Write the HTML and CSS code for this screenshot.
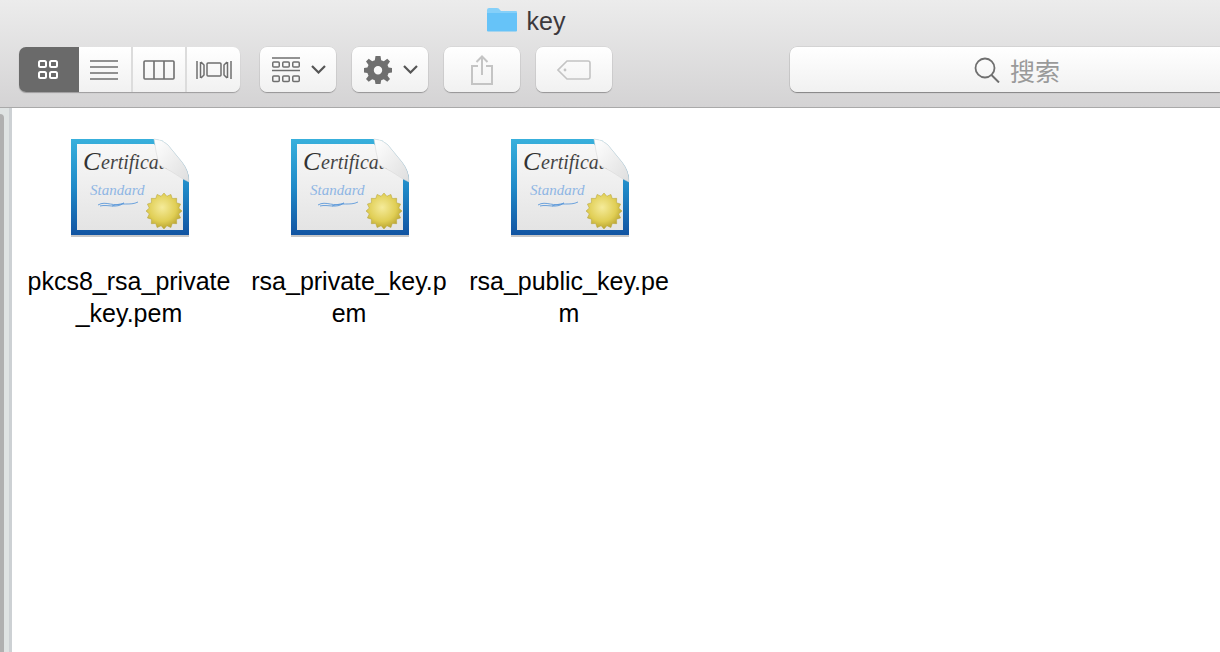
FILE: index.html
```html
<!DOCTYPE html>
<html lang="zh-CN">
<head>
  <meta charset="UTF-8" />
  <title>key</title>
  <link rel="stylesheet" href="styles.css">
</head>
<body>

  <svg width="0" height="0" class="defs">
    <defs>
      <linearGradient id="frame" x1="0" y1="0" x2="0" y2="1">
        <stop offset="0" stop-color="#38b0dc"/>
        <stop offset="0.5" stop-color="#1f8ac8"/>
        <stop offset="1" stop-color="#1254a2"/>
      </linearGradient>
      <linearGradient id="paper" x1="0" y1="0" x2="0" y2="1">
        <stop offset="0" stop-color="#f8f8f8"/>
        <stop offset="1" stop-color="#e4e4e4"/>
      </linearGradient>
      <linearGradient id="flap" x1="0" y1="0" x2="1" y2="1">
        <stop offset="0" stop-color="#ffffff"/>
        <stop offset="1" stop-color="#dedede"/>
      </linearGradient>
      <radialGradient id="seal" cx="0.45" cy="0.4" r="0.65">
        <stop offset="0" stop-color="#f5eb9a"/>
        <stop offset="0.6" stop-color="#e0ce55"/>
        <stop offset="1" stop-color="#b09a28"/>
      </radialGradient>
      <symbol id="cert" viewBox="0 0 120 100">
        <path d="M1 1H83Q92 1 98 7L112 24Q119 33 119 42V98H1Z" fill="#000" opacity=".22" transform="translate(0 1)"/>
        <path d="M1 1H83Q92 1 98 7L112 24Q119 33 119 42V97H1Z" fill="url(#frame)"/>
        <path d="M7 6H84L113 40V92H7Z" fill="url(#paper)"/>
        <text x="13" y="32" class="cert-title">C</text>
        <text x="31" y="31" class="cert-rest">ertificate</text>
        <text x="20" y="57" class="cert-std">Standard</text>
        <path d="M28 67C36 62 44 70 54 65C46 71 38 66 30 68M42 68C52 64 60 68 68 64" fill="none" stroke="#5d9ada" stroke-width=".9"/>
        <path d="M84 1Q92 1 98 7L112 24Q119 33 119 44L113 41Q100 32 89 27Q86 15 84 1Z" fill="url(#flap)" stroke="#d4d4d4" stroke-width=".5"/>
        <path transform="translate(94 73)" d="M18 0L14.700 2.900 16.600 6.900 12.500 8.300 12.700 12.700 8.300 12.500 6.900 16.600 2.900 14.700 0 18-2.900 14.700-6.900 16.600-8.300 12.500-12.700 12.700-12.500 8.300-16.600 6.900-14.700 2.900-18 0-14.700-2.900-16.600-6.900-12.500-8.300-12.700-12.700-8.300-12.500-6.900-16.600-2.900-14.700 0-18 2.900-14.700 6.900-16.600 8.300-12.500 12.700-12.700 12.500-8.300 16.600-6.900 14.700-2.900Z" fill="url(#seal)" stroke="#b5a338" stroke-width=".5"/>
      </symbol>
    </defs>
  </svg>

  <header class="toolbar">
    <div class="title">
      <svg class="folder" width="32" height="25" viewBox="0 0 32 25">
        <path d="M1 3Q1 1 3 1H11Q13 1 14 3L15 4H30Q31 4 31 5V24H1Z" fill="#85d0f9"/>
        <path d="M1 6H31V23Q31 24.500 30 24.500H2Q1 24.500 1 23Z" fill="#66c3f8"/>
      </svg>
      <span>key</span>
    </div>

    <div class="tools">
      <div class="btn-group">
        <button class="btn seg active">
          <svg width="20" height="20" viewBox="0 0 20 20" fill="none" stroke="#fff" stroke-width="2"><rect x="1" y="1" width="7" height="6" rx="1.500"/><rect x="12" y="1" width="7" height="6" rx="1.500"/><rect x="1" y="12" width="7" height="6" rx="1.500"/><rect x="12" y="12" width="7" height="6" rx="1.500"/></svg>
        </button>
        <button class="btn seg s-list">
          <svg width="28" height="20" viewBox="0 0 28 20" stroke="#6f6f6f" stroke-width="1.400"><path d="M0 1H28M0 7H28M0 13H28M0 19H28"/></svg>
        </button>
        <button class="btn seg s-col">
          <svg width="32" height="20" viewBox="0 0 32 20" fill="none" stroke="#6f6f6f" stroke-width="1.600"><rect x="1" y="1" width="30" height="18" rx="1"/><path d="M11 1V19M21 1V19"/></svg>
        </button>
        <button class="btn seg s-flow">
          <svg width="36" height="20" viewBox="0 0 36 20" fill="none" stroke="#6f6f6f" stroke-width="1.500"><rect x="11" y="3" width="14" height="13" rx="1"/><path d="M1 1V19M35 1V19M4.500 2V18M31.500 2V18M5 2L8 5V15L5 18M31 2L28 5V15L31 18"/></svg>
        </button>
      </div>

      <button class="btn arrange">
        <svg width="28" height="26" viewBox="0 0 28 26" fill="none" stroke="#6f6f6f"><path d="M0 1H28M0 13.500H28" stroke-width="1.300"/><g stroke-width="1.500"><rect x=".75" y="5" width="6.500" height="5" rx="1"/><rect x="10.750" y="5" width="6.500" height="5" rx="1"/><rect x="20.750" y="5" width="6.500" height="5" rx="1"/><rect x=".75" y="19" width="6.500" height="5.500" rx="1"/><rect x="10.750" y="19" width="6.500" height="5.500" rx="1"/><rect x="20.750" y="19" width="6.500" height="5.500" rx="1"/></g></svg>
        <svg class="chev" width="15" height="9" viewBox="0 0 15 9" fill="none" stroke="#555" stroke-width="2.200"><path d="M1 1L7.500 7.500L14 1"/></svg>
      </button>

      <button class="btn action">
        <svg width="28" height="28" viewBox="0 0 28 28"><path fill="#6f6f6f" fill-rule="evenodd" d="M11.500 0H16.500L17.200 4.200L19.800 5.300L23.300 2.800L26 5.500L23.500 9L24.600 11.500L28 12V16.500L24.600 17.100L23.500 19.700L26 23L23.300 25.800L19.800 23.300L17.200 24.300L16.500 28H11.500L10.800 24.300L8.200 23.300L4.700 25.800L2 23L4.500 19.700L3.400 17.100L0 16.500V12L3.400 11.500L4.500 9L2 5.500L4.700 2.800L8.200 5.300L10.800 4.200ZM14 10A4.200 4.200 0 1 0 14 18.400A4.200 4.200 0 1 0 14 10Z"/></svg>
        <svg class="chev" width="15" height="9" viewBox="0 0 15 9" fill="none" stroke="#555" stroke-width="2.200"><path d="M1 1L7.500 7.500L14 1"/></svg>
      </button>

      <button class="btn share">
        <svg width="22" height="30" viewBox="0 0 22 30" fill="none" stroke="#c4c4c4" stroke-width="2"><path d="M7 11H1V29H21V11H15M11 20V2M5.500 7L11 1.500L16.500 7"/></svg>
      </button>

      <button class="btn tag">
        <svg width="34" height="20" viewBox="0 0 34 20" fill="none" stroke="#c4c4c4" stroke-width="1.600"><path d="M10 1H31Q33 1 33 3V17Q33 19 31 19H10L1 10Z"/><circle cx="8" cy="10" r="1.400" fill="#c4c4c4" stroke="none"/></svg>
      </button>

      <div class="search">
        <svg width="26" height="26" viewBox="0 0 26 26" fill="none" stroke="#6f6f6f"><circle cx="11" cy="11" r="9.500" stroke-width="1.800"/><path d="M17.500 18L25 25.500" stroke-width="2"/></svg>
        <span>搜索</span>
      </div>
    </div>
  </header>

  <main class="content">
    <div class="gutter"></div>
    <div class="files">
      <div class="file">
        <svg class="cert" width="120" height="100"><use href="#cert"/></svg>
        <div class="name">pkcs8_rsa_private<br>_key.pem</div>
      </div>
      <div class="file">
        <svg class="cert" width="120" height="100"><use href="#cert"/></svg>
        <div class="name">rsa_private_key.p<br>em</div>
      </div>
      <div class="file">
        <svg class="cert" width="120" height="100"><use href="#cert"/></svg>
        <div class="name">rsa_public_key.pe<br>m</div>
      </div>
    </div>
  </main>

</body>
</html>
```

FILE: styles.css
```css
html,
body {
  margin: 0;
  height: 100%;
  overflow: hidden;
}

body {
  display: flex;
  flex-direction: column;
  background: #fff;
  font-family: "Liberation Sans", "Noto Sans CJK SC", sans-serif;
}

.defs {
  position: absolute;
}

/* Barra superior */
.toolbar {
  height: 108px;
  flex: none;
  box-sizing: border-box;
  background: linear-gradient(to bottom, #ececec, #d4d3d4);
  border-bottom: 1px solid #a9a9a9;
}

.title {
  height: 47px;
  display: flex;
  justify-content: center;
  align-items: flex-start;
  gap: 9px;
  padding: 8px 169px 0 0;
  box-sizing: border-box;
  color: #3c383c;
  font-size: 25px;
  line-height: 27px;
}

.folder {
  margin-top: -1px;
}

.tools {
  display: flex;
  align-items: center;
  padding-left: 19px;
}

.btn {
  height: 45px;
  box-sizing: border-box;
  display: flex;
  align-items: center;
  justify-content: center;
  padding: 0;
  border: none;
  border-radius: 7px;
  background: linear-gradient(to bottom, #fff, #f1f1f1);
  box-shadow: 0 1px 1px rgba(0, 0, 0, 0.28), 0 0 0 0.5px rgba(0, 0, 0, 0.08);
}

.btn-group {
  display: flex;
  gap: 2px;
  height: 45px;
  border-radius: 7px;
  background: #dcdcdc;
  box-shadow: 0 1px 1px rgba(0, 0, 0, 0.28);
  overflow: hidden;
}

.seg {
  border-radius: 0;
  box-shadow: none;
}

.active {
  width: 60px;
  padding-right: 2px;
  background: #6a6a6a;
  margin-right: -2px;
}

.s-list {
  width: 52px;
  padding-right: 2px;
}

.s-col {
  width: 52px;
}

.s-flow {
  width: 53px;
}

.arrange {
  width: 76px;
  margin-left: 20px;
  padding-left: 12px;
  justify-content: flex-start;
  gap: 11px;
}

.action {
  width: 76px;
  margin-left: 16px;
  padding-left: 12px;
  justify-content: flex-start;
  gap: 11px;
}

.share {
  width: 76px;
  margin-left: 16px;
}

.tag {
  width: 76px;
  margin-left: 16px;
}

.search {
  margin-left: 178px;
  flex: 1;
  height: 45px;
  box-sizing: border-box;
  display: flex;
  align-items: center;
  gap: 10px;
  padding-left: 184px;
  border-radius: 7px 0 0 7px;
  background: linear-gradient(to bottom, #fff, #f1f1f1);
  box-shadow: 0 1px 1px rgba(0, 0, 0, 0.35), 0 0 0 0.5px rgba(0, 0, 0, 0.12);
  color: #9a9a9a;
  font-size: 25px;
}

/* Area dos arquivos */
.content {
  flex: 1;
  display: flex;
}

.gutter {
  width: 12px;
  flex: none;
  box-sizing: border-box;
  padding-top: 6px;
  background: #dfe3e3;
  border-right: 3px solid #cdd1d4;
}

.gutter::before {
  content: "";
  display: block;
  width: 4px;
  height: 100%;
  background: #b0b0b0;
  border-top-right-radius: 4px;
}

.files {
  display: flex;
  align-items: flex-start;
  padding: 30px 0 0 7px;
}

.file {
  width: 220px;
  display: flex;
  flex-direction: column;
  align-items: center;
}

.cert {
  display: block;
  margin-left: 2px;
}

.cert-title {
  font: italic 26px "Liberation Serif", serif;
  fill: #333;
}

.cert-rest {
  font: italic 20px "Liberation Serif", serif;
  fill: #444;
}

.cert-std {
  font: italic 15px "Liberation Serif", serif;
  fill: #8fb6e4;
}

.name {
  margin-top: 27px;
  color: #000;
  font-size: 25px;
  line-height: 32px;
  text-align: center;
  white-space: nowrap;
}
```
